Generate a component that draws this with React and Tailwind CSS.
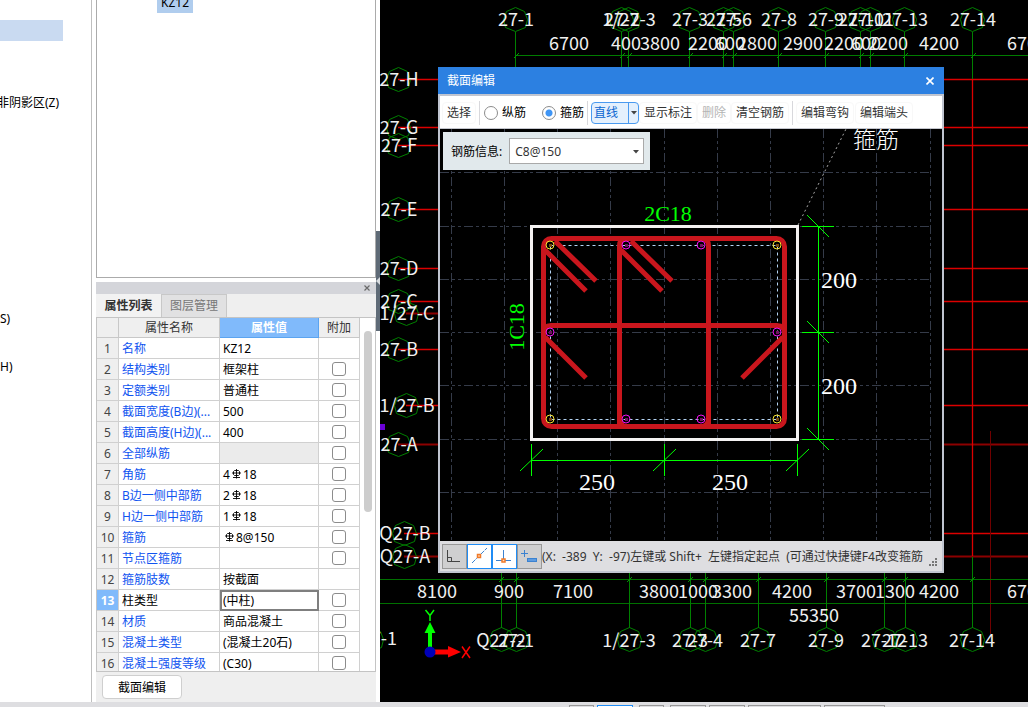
import { useState } from 'react';

const SANS = "font-[family-name:'Noto_Sans','Noto_Sans_CJK_SC',sans-serif]";
const CAD_FONT = "font-[family-name:'Noto_Sans_CJK_SC',sans-serif]";
const SERIF = "font-[family-name:'Liberation_Serif','Noto_Sans_CJK_SC',serif]";

const properties = [
  { name: '名称', value: 'KZ12', check: false },
  { name: '结构类别', value: '框架柱', check: true },
  { name: '定额类别', value: '普通柱', check: true },
  { name: '截面宽度(B边)(...', value: '500', check: true },
  { name: '截面高度(H边)(...', value: '400', check: true },
  { name: '全部纵筋', value: '', check: true, disabled: true },
  { name: '角筋', count: '4', value: '18', rebar: true, check: true },
  { name: 'B边一侧中部筋', count: '2', value: '18', rebar: true, check: true },
  { name: 'H边一侧中部筋', count: '1', value: '18', rebar: true, check: true },
  { name: '箍筋', count: '', value: '8@150', rebar: true, check: true },
  { name: '节点区箍筋', value: '', check: true },
  { name: '箍筋肢数', value: '按截面', check: false },
  { name: '柱类型', value: '(中柱)', check: true },
  { name: '材质', value: '商品混凝土', check: true },
  { name: '混凝土类型', value: '(混凝土20石)', check: true },
  { name: '混凝土强度等级', value: '(C30)', check: true },
];

// 轴网数据
const topAxes = [
  [516, '27-1'], [622, '27-2'], [629, '1/27-3'], [690, '27-3'], [724, '27-5'], [734, '27-6'],
  [779, '27-8'], [826, '27-9'], [861, '27-10'], [871, '27-11'], [905, '27-13'], [973, '27-14'],
];
const topDims = [
  [569, '6700'], [626, '400'], [660, '3800'], [708, '2200'], [730, '600'], [757, '2800'],
  [803, '2900'], [844, '2200'], [866, '600'], [888, '2200'], [939, '4200'], [1027, '6700'],
];
const bottomAxes = [
  [501, 'Q27-2'], [516, '27-1'], [629, '1/27-3'], [690, '27-3'], [705, '27-4'], [758, '27-7'],
  [826, '27-9'], [884, '27-12'], [905, '27-13'], [972, '27-14'],
];
const bottomDims = [
  [437, '8100'], [509, '900'], [573, '7100'], [659, '3800'], [698, '1000'], [732, '3300'],
  [792, '4200'], [856, '3700'], [895, '1300'], [939, '4200'], [1027, '6700'],
];
const sideAxes = [
  [398, 79, '27-H'], [398, 127, '27-G'], [398, 145, '27-F'], [398, 209, '27-E'],
  [398, 268, '27-D'], [398, 301, '27-C'], [406, 313, '1/27-C', true], [398, 349, '27-B'],
  [406, 405, '1/27-B'], [398, 444, '27-A', true], [404, 533, 'Q27-B'], [404, 556, 'Q27-A', true],
];

const AxisBubble = ({ x, y }) => (
  <polygon
    points="0,-12 9,-8 12,0 10,8 0,12 -10,8 -12,0 -9,-8"
    transform={`translate(${x + 0.5} ${y + 0.5})`}
    fill="none"
    stroke="#008000"
  />
);

const Tick = ({ x, y }) => (
  <path d={`M${x - 2} ${y + 3}L${x + 3} ${y - 2}`} stroke="#009a00" />
);

const AxisCanvas = () => (
  <svg
    viewBox="380 0 648 702"
    preserveAspectRatio="xMinYMin slice"
    className={`block size-full bg-black ${CAD_FONT}`}
  >
    <g strokeWidth="1">
      {sideAxes.map(([x, y, label, dark]) => (
        <path
          key={label}
          d={`M${x} ${y + 0.5}H${label === '1/27-C' ? 440 : 1028}`}
          stroke={dark ? '#8c0000' : '#dc0000'}
          strokeWidth={dark ? 2 : 1.3}
        />
      ))}
      <path d="M972.5 79V556" stroke="#dc0000" strokeWidth="1.300" />
      <path d="M990.5 431V634" stroke="#700000" />

      <path d="M516 55.5H1028" stroke="#007c00" />
      <path d="M380 579.5H1028M380 603.5H1028" stroke="#007000" />
      {topAxes.map(([x]) => (
        <g key={x}>
          <path d={`M${x - 0.5} 32V79`} stroke="#008000" />
          <Tick x={x} y={55} />
          <AxisBubble x={x - 1} y={19} />
        </g>
      ))}
      <path d="M972.5 557V580" stroke="#008000" />
      {bottomAxes.map(([x]) => (
        <g key={x}>
          <path d={`M${x + 0.5} 570V628`} stroke="#008000" />
          <Tick x={x} y={579} />
          <AxisBubble x={x} y={639} />
        </g>
      ))}
      <AxisBubble x={371} y={639} />
      {sideAxes.map(([x, y, label]) => (
        <AxisBubble key={label} x={x} y={y} />
      ))}
    </g>

    <g fill="#f0f0f0" fontSize="18" textAnchor="middle">
      {topAxes.map(([x, label]) => (
        <text key={label} x={x} y="26">{label}</text>
      ))}
      {topDims.map(([x, label]) => (
        <text key={x} x={x} y="50">{label}</text>
      ))}
      {sideAxes.map(([x, y, label]) => (
        <text key={label} x={x + 1} y={y + 7}>{label}</text>
      ))}
      {bottomDims.map(([x, label]) => (
        <text key={x} x={x} y="598">{label}</text>
      ))}
      {bottomAxes.map(([x, label]) => (
        <text key={label} x={x} y="647">{label}</text>
      ))}
      <text x="814" y="622">55350</text>
      <text x="379" y="645">27-1</text>
    </g>

    <rect x="380" y="424" width="5" height="6" fill="#6a00d8" />

    {/* 坐标系图标 */}
    <path d="M428 651V633H424.5L430 622L435.500 633H432V651Z" fill="#00ff00" />
    <path d="M430 649.500H448V646L461 652L448 657.500V654.500H430Z" fill="#ff0000" />
    <circle cx="430" cy="652" r="5.500" fill="#0000b8" />
    <path d="M425.500 610L430 615.500L434 610M430 615.500V621" stroke="#00ff00" strokeWidth="1.500" fill="none" />
    <path d="M462 646.500L470 658M470 646.500L462 658" stroke="#ff0000" strokeWidth="1.500" />
  </svg>
);

const gridX = [451, 504, 557, 610, 664, 717, 770, 823, 876, 930];
const gridY = [172, 226, 279, 332, 385, 439, 492];
const cornerBars = [[550, 245], [777, 245], [550, 419], [777, 419]];
const middleBars = [[626, 245], [701, 245], [626, 419], [701, 419], [550, 332], [777, 332]];

const SectionCanvas = () => (
  <svg
    viewBox="440 129 502 412"
    preserveAspectRatio="xMinYMin slice"
    className={`block size-full bg-black ${SERIF}`}
  >
    <g stroke="#353b49" strokeDasharray="9 3 3 3 3 3" fill="none">
      {gridX.map((x) => (
        <path key={x} d={`M${x + 0.5} 129V540`} />
      ))}
      {gridY.map((y) => (
        <path key={y} d={`M440 ${y + 0.5}H931`} />
      ))}
    </g>

    <path d="M798 225L846 129" stroke="#a8a8a8" strokeDasharray="2 3" />
    <rect x="531.5" y="226.5" width="266" height="213" fill="none" stroke="#f4f2f2" strokeWidth="3" />
    <rect x="550.5" y="245.5" width="227" height="174" fill="none" stroke="#b4d4f4" strokeDasharray="3 3" />

    {/* 箍筋 */}
    <g stroke="#c9161d" strokeWidth="5" fill="none">
      <rect x="543.5" y="238.5" width="241" height="188" rx="8" />
      <path d="M619.5 426V246Q619.500 238.500 627 238.500M708.5 426V246Q708.500 238.500 701 238.500" />
      <path d="M619.5 418Q619.500 426.500 627 426.500M708.5 418Q708.500 426.500 701 426.500" />
      <path d="M544 333Q544 325.500 551 325.500H777Q784.500 325.500 784.500 333" />
      <path d="M545 250L586 291M555 241L596 281M621 250L662 291M631 241L672 281" />
      <path d="M545 337L586 378M783 337L742 378" />
    </g>
    <g fill="none">
      {cornerBars.map(([x, y]) => (
        <g key={`${x}-${y}`}>
          <rect x={x - 1} y={y - 1} width="3" height="3" fill="#7a4a10" />
          <circle cx={x} cy={y} r="4" stroke="#f4e030" />
        </g>
      ))}
      {middleBars.map(([x, y]) => (
        <g key={`${x}-${y}`}>
          <rect x={x - 1} y={y - 1} width="3" height="3" fill="#701060" />
          <circle cx={x} cy={y} r="4" stroke="#f010f0" />
        </g>
      ))}
    </g>

    {/* 尺寸标注 */}
    <g stroke="#00ff00" fill="none">
      <path d="M818.5 226V440M531 460.5H798" />
      {[226, 332, 439].map((y) => (
        <path key={y} d={`M802 ${y + 0.5}H834M807 ${y - 11}L829 ${y + 11}`} />
      ))}
      {[531, 664, 797].map((x) => (
        <path key={x} d={`M${x + 0.5} 444V476M${x - 11} 471L${x + 12} 449`} />
      ))}
    </g>
    <g fontSize="24" fill="#ffffff">
      <text x="821" y="288">200</text>
      <text x="821" y="394">200</text>
      <text x="579" y="490">250</text>
      <text x="712" y="490">250</text>
      <text x="853" y="148" fontSize="23" fontWeight="300">箍筋</text>
    </g>
    <g fontSize="22" fill="#00ff00" textAnchor="middle">
      <text x="668" y="221">2C18</text>
      <text x="0" y="0" transform="translate(524 327) rotate(-90)">1C18</text>
    </g>
  </svg>
);

const RebarMark = () => (
  <svg viewBox="0 0 9 10" className="mx-0.5 inline-block h-[10px] w-[9px] align-[0px]" fill="none" stroke="#000" strokeWidth="0.900">
    <path d="M4.500 0V9.500M2.500 1.500H6.500L7.500 2.500V5.500L6.500 6.500H2.500L1.500 5.500V2.500ZM0 4H9M1 8.500H8" />
  </svg>
);

const Caret = ({ className }) => (
  <svg viewBox="0 0 6 4" className={`h-1 w-1.5 ${className || ''}`} fill="#444">
    <path d="M0 0H6L3 3.500Z" />
  </svg>
);

const ToolButton = ({ children, disabled }) => (
  <button
    disabled={disabled}
    className="h-[22px] shrink-0 rounded-sm border border-[#f8f8f8] px-1 leading-5 text-[#333] disabled:text-[#b4b4b4]"
  >
    {children}
  </button>
);

const Separator = () => <div className="mx-[3px] h-6 w-px shrink-0 bg-[#d8d8dc]" />;

const RadioOption = ({ label, checked, onChange }) => (
  <label className="flex shrink-0 items-center gap-1">
    <input
      type="radio"
      name="barType"
      checked={checked}
      onChange={onChange}
      className="size-[14px] appearance-none rounded-full border border-[#8c8c8c] bg-white checked:bg-[radial-gradient(circle,#3f95f5_3px,#fff_4px)]"
    />
    {label}
  </label>
);

const snapButtons = [
  {
    title: '正交',
    icon: (
      <path d="M4.500 5V16.500H17M4.500 12.500H8.500V16.500" stroke="#444" />
    ),
  },
  {
    title: '中点',
    active: true,
    icon: (
      <>
        <path d="M4 18L19 3" stroke="#3b82d0" strokeDasharray="5 1" />
        <rect x="9.500" y="9.500" width="3" height="3" stroke="#f07a28" strokeWidth="1.500" fill="#ffd9bd" />
      </>
    ),
  },
  {
    title: '垂点',
    active: true,
    icon: (
      <>
        <path d="M3 15.500H18M10.500 5V15" stroke="#3b82d0" />
        <rect x="9" y="14" width="3" height="3" stroke="#f07a28" strokeWidth="1.500" fill="#ffd9bd" />
      </>
    ),
  },
  {
    title: '动态输入',
    icon: (
      <>
        <path d="M3 8.500H10M6.500 5V12" stroke="#3b82d0" />
        <rect x="9.500" y="13.500" width="9" height="3" stroke="#3b82d0" fill="#5d9be0" />
      </>
    ),
  },
];

const SectionEditor = () => {
  const [barType, setBarType] = useState('stirrup');

  return (
    <div role="dialog" aria-label="截面编辑" className="absolute left-[58px] top-[67px] w-[506px]">
      <div className="flex h-[27px] items-center justify-between bg-[#2c80e1] px-[9px] text-white">
        <h2>截面编辑</h2>
        <button aria-label="关闭" className="flex size-[10px] items-center justify-center">
          <svg viewBox="0 0 8 8" className="size-2" stroke="#fff" strokeWidth="1.600">
            <path d="M0.500 0.500L7.500 7.500M7.500 0.500L0.500 7.500" />
          </svg>
        </button>
      </div>

      <div className="border-2 border-[#c0c5d0]">
        <div className="flex h-[33px] items-center border-b border-[#c4c6ce] bg-white pl-0.5 pt-px text-black">
          <ToolButton>选择</ToolButton>
          <Separator />
          <div className="flex gap-4 pl-px">
            <RadioOption label="纵筋" checked={barType === 'bar'} onChange={() => setBarType('bar')} />
            <RadioOption label="箍筋" checked={barType === 'stirrup'} onChange={() => setBarType('stirrup')} />
          </div>
          <Separator />
          <div className="flex h-[22px] w-12 shrink-0 rounded-sm border border-[#4a9af0] bg-[#e4f0fd]">
            <button className="flex-1 pl-0.5 text-left leading-5 text-[#0a66d0]">直线</button>
            <button aria-label="更多线型" className="flex w-[10px] items-center justify-center border-l border-[#4a9af0]">
              <Caret />
            </button>
          </div>
          <ToolButton>显示标注</ToolButton>
          <ToolButton disabled>删除</ToolButton>
          <ToolButton>清空钢筋</ToolButton>
          <Separator />
          <div className="flex gap-px">
            <ToolButton>编辑弯钩</ToolButton>
            <ToolButton>编辑端头</ToolButton>
          </div>
        </div>

        <div className="relative h-[412px] bg-black">
          <SectionCanvas />
          <div className="absolute left-[3px] top-[3px] flex h-[38px] items-center gap-[7px] bg-[#e1e9ec] px-2 pr-1.5">
            <label htmlFor="barInfo" className="pt-px">钢筋信息:</label>
            <div className="relative">
              <select
                id="barInfo"
                defaultValue="C8@150"
                className="h-[26px] w-[135px] appearance-none border border-[#a9a9a9] bg-white pl-[5px] pt-0.5 text-[#333]"
              >
                <option>C8@150</option>
              </select>
              <Caret className="pointer-events-none absolute right-[5px] top-3" />
            </div>
          </div>
        </div>

        <div className="flex h-[30px] items-center bg-[#dedee1] pl-0.5">
          {snapButtons.map(({ title, icon, active }) => (
            <button
              key={title}
              aria-label={title}
              className={`size-[25px] shrink-0 border ${
                active ? 'border-[#1f8cf5] bg-white' : 'border-[#989898] bg-[#cfcfd0]'
              }`}
            >
              <svg viewBox="0 0 23 23" className="size-[23px]" fill="none">{icon}</svg>
            </button>
          ))}
          <p className="min-w-0 flex-1 overflow-hidden pt-0.5 whitespace-pre text-[#333]">
            {'(X:  -389  Y:  -97)左键或 Shift+  左键指定起点  (可通过快捷键F4改变箍筋'}
          </p>
          <svg viewBox="0 0 9 9" className="mr-1 mb-1 size-[9px] shrink-0 self-end" fill="#777">
            <path d="M6 0h2v2h-2zM3 3h2v2h-2zM6 3h2v2h-2zM0 6h2v2h-2zM3 6h2v2h-2zM6 6h2v2h-2z" />
          </svg>
        </div>
      </div>
    </div>
  );
};

const PropertyTable = () => {
  const [selected, setSelected] = useState(12);
  const cell = 'h-[21px] border-r border-b border-[#d0d0d0] p-0 pt-px pl-[3px] overflow-hidden whitespace-nowrap';

  return (
    <div className="flex min-h-0 flex-1 overflow-hidden border border-[#c4c4c4] bg-white">
      <div className="min-w-0 flex-1 overflow-hidden">
        <table className="w-full table-fixed border-separate border-spacing-0">
          <colgroup>
            <col className="w-[22px]" />
            <col className="w-[101px]" />
            <col />
            <col className="w-[41px]" />
          </colgroup>
          <thead>
            <tr className="bg-[#efefef] text-[#333]">
              <th className="h-5 border-r border-b border-[#c8c8c8] p-0" />
              <th className="border-r border-b border-[#c8c8c8] p-0 font-normal">属性名称</th>
              <th className="border-r border-b border-[#5ba4f0] bg-[#80bafb] p-0 font-bold text-white">属性值</th>
              <th className="border-r border-b border-[#c8c8c8] p-0 font-normal">附加</th>
            </tr>
          </thead>
          <tbody>
            {properties.map((row, i) => (
              <tr key={row.name} onClick={() => setSelected(i)}>
                <th
                  scope="row"
                  className={`h-[21px] border-r border-b border-[#d0d0d0] p-0 pt-px ${
                    selected === i ? 'bg-[#80bafb] font-bold text-white' : 'bg-[#efefef] font-normal text-[#444]'
                  }`}
                >
                  {i + 1}
                </th>
                <td className={`${cell} ${selected === i ? 'text-black' : 'text-[#1054f0]'}`}>{row.name}</td>
                <td
                  className={`${cell} ${row.disabled ? 'bg-[#ebebeb]' : ''} ${
                    selected === i ? 'outline-2 -outline-offset-2 outline-[#7f7f7f]' : ''
                  }`}
                >
                  {row.rebar ? (
                    <>
                      {row.count}
                      <RebarMark />
                      {row.value}
                    </>
                  ) : (
                    row.value
                  )}
                </td>
                <td className="border-r border-b border-[#d0d0d0] p-0">
                  {row.check && (
                    <input
                      type="checkbox"
                      aria-label={`附加 ${row.name}`}
                      className="mx-auto block size-[14px] appearance-none rounded-[3px] border border-[#8c8c8c] bg-white checked:bg-[#80bafb]"
                    />
                  )}
                </td>
              </tr>
            ))}
          </tbody>
        </table>
      </div>
      <div className="w-[15px] shrink-0 pl-1 pt-[13px]">
        <div className="h-[181px] w-2 rounded-full bg-[#cdcdcd]" />
      </div>
    </div>
  );
};

const PropertyDock = () => (
  <section className="mt-1 flex min-h-0 flex-1 flex-col bg-[#efefef]">
    <div className="flex h-3 shrink-0 items-center justify-end bg-[#d4d5da] pr-[6px]">
      <button aria-label="关闭面板">
        <svg viewBox="0 0 6 6" className="size-1.5" stroke="#6a6a6a" strokeWidth="1.200">
          <path d="M0.500 0.500L5.500 5.500M5.500 0.500L0.500 5.500" />
        </svg>
      </button>
    </div>
    <div role="tablist" className="flex h-[23px] shrink-0">
      <button role="tab" aria-selected="true" className="w-[65px] bg-[#f2f2f2] font-semibold text-[#333]">
        属性列表
      </button>
      <button role="tab" aria-selected="false" className="w-[66px] border-x border-t border-[#c8c8c8] bg-[#e1e1e2] text-[#777]">
        图层管理
      </button>
    </div>
    <PropertyTable />
    <div className="flex h-[30px] shrink-0 items-center px-1.5">
      <button className="h-6 w-20 rounded-sm border border-[#cfcfcf] bg-white pt-px text-black">截面编辑</button>
    </div>
  </section>
);

const App = () => (
  <div className={`flex h-screen flex-col overflow-hidden bg-white text-xs text-black ${SANS}`}>
    <div className="flex min-h-0 flex-1">
      <nav className="flex w-[92px] shrink-0 flex-col items-start overflow-hidden border-r border-[#bfbfbf] pt-5">
        <div className="h-[21px] w-[63px] bg-[#c9daf1]" />
        <div className="mt-[52px] flex w-[59px] justify-end whitespace-nowrap leading-5">非阴影区(Z)</div>
        <div className="mt-[196px] leading-5">S)</div>
        <div className="mt-7 leading-5">H)</div>
      </nav>

      <div className="flex w-[284px] shrink-0 flex-col pl-1">
        <div className="h-[278px] shrink-0 border border-t-0 border-[#ababab] pl-[60px]">
          <div className="flex h-[13px] w-9 items-end justify-center overflow-hidden bg-[#b0cdee]">
            <span className="leading-5">KZ12</span>
          </div>
        </div>
        <PropertyDock />
      </div>

      <div className="w-1 shrink-0 pt-[231px]">
        <div className="flex h-[100px] items-center justify-end bg-[#5f6b77]">
          <svg viewBox="0 0 4 8" className="h-2 w-1" fill="#d8dce0">
            <path d="M4 0V8L0 4Z" />
          </svg>
        </div>
      </div>

      <main className="relative min-w-0 flex-1 overflow-hidden bg-black">
        <AxisCanvas />
        <SectionEditor />
      </main>
    </div>

    <footer className="flex h-[5px] shrink-0 items-end gap-[3px] bg-[#dedee1] pl-[569px]">
      <div className="h-0.5 w-[25px] border border-b-0 border-[#989898]" />
      <div className="h-0.5 w-9 border border-b-0 border-[#1f8cf5] bg-white" />
      <div className="ml-[3px] h-0.5 w-[25px] border border-b-0 border-[#989898]" />
      <div className="ml-[3px] h-0.5 w-9 border border-b-0 border-[#989898]" />
      <div className="h-0.5 w-9 border border-b-0 border-[#989898]" />
      <div className="h-0.5 w-[73px] border border-b-0 border-[#989898]" />
      <div className="h-0.5 w-[61px] border border-b-0 border-[#989898]" />
    </footer>
  </div>
);

export default App;
